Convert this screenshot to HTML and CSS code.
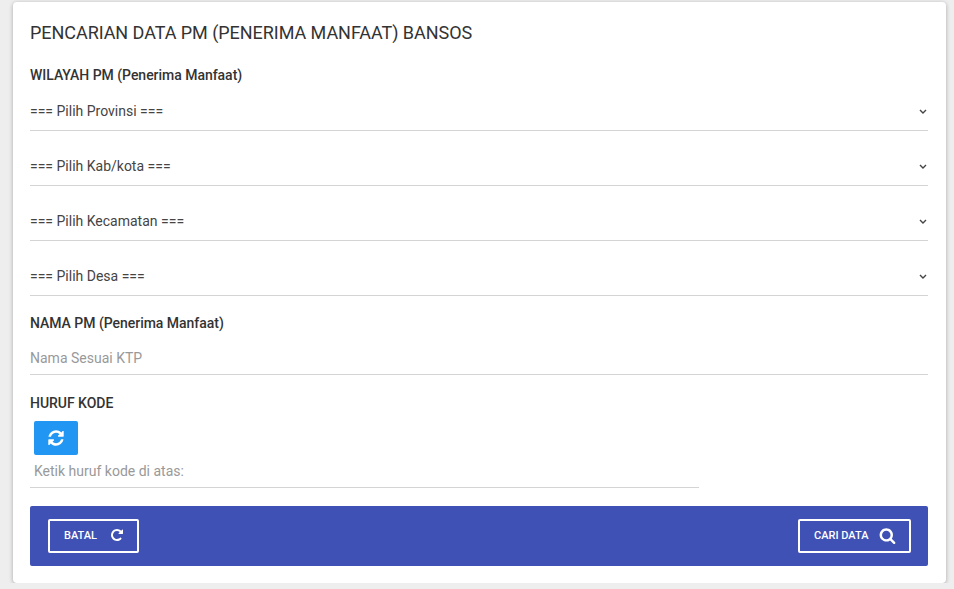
FILE: index.html
```html
<!DOCTYPE html>
<html lang="en">
<head>
    <meta charset="UTF-8">
    <title>Pencarian Data PM</title>
    <link rel="stylesheet" href="styles.css">
</head>
<body>
    <div class="card">
        <h1 class="card-title">PENCARIAN DATA PM (PENERIMA MANFAAT) BANSOS</h1>

        <label class="field-label">WILAYAH PM (Penerima Manfaat)</label>
        <div class="select-list">
            <div class="select-box">
                <span>=== Pilih Provinsi ===</span>
                <svg class="caret" viewBox="0 0 8 5"><path d="M1 1l3 3 3-3"/></svg>
            </div>
            <div class="select-box">
                <span>=== Pilih Kab/kota ===</span>
                <svg class="caret" viewBox="0 0 8 5"><path d="M1 1l3 3 3-3"/></svg>
            </div>
            <div class="select-box">
                <span>=== Pilih Kecamatan ===</span>
                <svg class="caret" viewBox="0 0 8 5"><path d="M1 1l3 3 3-3"/></svg>
            </div>
            <div class="select-box">
                <span>=== Pilih Desa ===</span>
                <svg class="caret" viewBox="0 0 8 5"><path d="M1 1l3 3 3-3"/></svg>
            </div>
        </div>

        <label class="field-label name-label">NAMA PM (Penerima Manfaat)</label>
        <div class="text-input">Nama Sesuai KTP</div>

        <label class="field-label code-label">HURUF KODE</label>
        <div class="captcha">
            <button class="reload-btn" type="button">
                <svg viewBox="0 0 1792 1792"><path d="M1639 1056q0 5-1 7-64 268-268 434.5t-478 166.5q-146 0-282.5-55t-243.5-157l-129 129q-19 19-45 19t-45-19-19-45v-448q0-26 19-45t45-19h448q26 0 45 19t19 45-19 45l-137 137q71 66 161 102t187 36q134 0 250-65t186-179q11-17 53-117 8-23 30-23h192q13 0 22.5 9.5t9.5 22.5zm25-800v448q0 26-19 45t-45 19h-448q-26 0-45-19t-19-45 19-45l138-138q-148-137-349-137-134 0-250 65t-186 179q-11 17-53 117-8 23-30 23h-199q-13 0-22.5-9.5t-9.5-22.5v-7q65-268 270-434.5t480-166.5q146 0 284 55.5t245 156.5l130-129q19-19 45-19t45 19 19 45z"/></svg>
            </button>
            <div class="captcha-input">Ketik huruf kode di atas:</div>
        </div>

        <div class="card-footer">
            <button class="outline-btn" type="button">
                BATAL
                <svg viewBox="0 0 1792 1792"><path d="M1664 256v448q0 26-19 45t-45 19h-448q-42 0-59-40-17-39 14-69l138-138q-148-137-349-137-104 0-198.5 40.5t-163.5 109.5-109.5 163.5-40.5 198.5 40.5 198.5 109.5 163.5 163.5 109.5 198.5 40.5q119 0 225-52t179-147q7-10 23-12 15 0 25 9l137 138q9 8 9.5 20.5t-7.5 22.5q-109 132-264 204.5t-327 72.5q-156 0-298-61t-245-164-164-245-61-298 61-298 164-245 245-164 298-61q147 0 284.5 55.5t244.5 156.5l130-129q29-31 70-14 39 17 39 59z"/></svg>
            </button>
            <button class="outline-btn" type="button">
                CARI DATA
                <svg viewBox="0 0 1792 1792"><path d="M1216 832q0-185-131.5-316.5t-316.5-131.5-316.5 131.5-131.5 316.5 131.5 316.5 316.5 131.5 316.5-131.5 131.5-316.5zm512 832q0 52-38 90t-90 38q-54 0-90-38l-343-342q-179 124-399 124-143 0-273.5-55.5t-225-150-150-225-55.5-273.5 55.5-273.5 150-225 225-150 273.5-55.5 273.5 55.5 225 150 150 225 55.5 273.5q0 220-124 399l343 343q37 37 37 90z"/></svg>
            </button>
        </div>
    </div>
</body>
</html>
```

FILE: styles.css
```css
*{
    margin: 0;
    padding: 0;
    box-sizing: border-box;
}
body{
    background-color: #eee;
    font-family: Roboto, "Liberation Sans", sans-serif;
    color: #333;
    overflow: hidden;
}
.card{
    width: 933px;
    height: 581px;
    margin: 2px 0 0 13px;
    padding: 0 18px 0 17px;
    background-color: #fff;
    border-radius: 4px;
    box-shadow: 0 1px 4px rgba(0, 0, 0, .3);
}
.card-title{
    padding-top: 19px;
    height: 63px;
    font-size: 18px;
    line-height: 23px;
    font-weight: 400;
    letter-spacing: -0.05px;
    color: #333;
}
.field-label{
    display: block;
    height: 20px;
    font-size: 14px;
    line-height: 20px;
    font-weight: 500;
    letter-spacing: -0.03px;
    color: #333;
}
/* select */
.select-box{
    display: flex;
    justify-content: space-between;
    align-items: center;
    height: 55px;
    padding: 16px 1px 0 0;
    border-bottom: 1px solid #d4d4d4;
    font-size: 14px;
    color: #444;
}
.select-box:first-child{
    height: 46px;
    padding-top: 7px;
}
.caret{
    width: 8px;
    height: 5px;
    fill: none;
    stroke: #444;
    stroke-width: 1.4;
}
/* text inputs */
.name-label{
    margin-top: 17px;
}
.text-input{
    height: 42px;
    padding: 15px 0 0 0;
    border-bottom: 1px solid #d4d4d4;
    font-size: 14px;
    line-height: 20px;
    color: #999;
}
.code-label{
    margin-top: 18px;
}
.captcha{
    width: 669px;
    margin-top: 8px;
}
.reload-btn{
    display: flex;
    align-items: center;
    justify-content: center;
    width: 44px;
    height: 34px;
    margin-left: 4px;
    background-color: #2196f3;
    border: none;
    border-radius: 2px;
}
.reload-btn svg{
    width: 18px;
    height: 18px;
    margin-left: -1px;
    fill: #fff;
}
.captcha-input{
    height: 33px;
    padding: 6px 0 0 4px;
    border-bottom: 1px solid #d4d4d4;
    font-size: 14px;
    line-height: 20px;
    color: #999;
}
/* footer */
.card-footer{
    display: flex;
    justify-content: space-between;
    align-items: center;
    height: 60px;
    margin-top: 18px;
    padding: 0 17px 0 18px;
    background-color: #3f51b5;
    border-radius: 2px;
}
.outline-btn{
    display: flex;
    align-items: center;
    justify-content: space-between;
    height: 34px;
    padding: 0 13px 2px 14px;
    background: none;
    border: 2px solid #fff;
    border-radius: 2px;
    color: #fff;
    font-family: inherit;
    font-size: 11px;
    font-weight: 500;
}
.outline-btn:first-child{
    width: 91px;
}
.outline-btn:last-child{
    width: 113px;
}
.outline-btn svg{
    width: 17px;
    height: 17px;
    fill: #fff;
}
.outline-btn:first-child svg{
    width: 14px;
    height: 14px;
}
```
